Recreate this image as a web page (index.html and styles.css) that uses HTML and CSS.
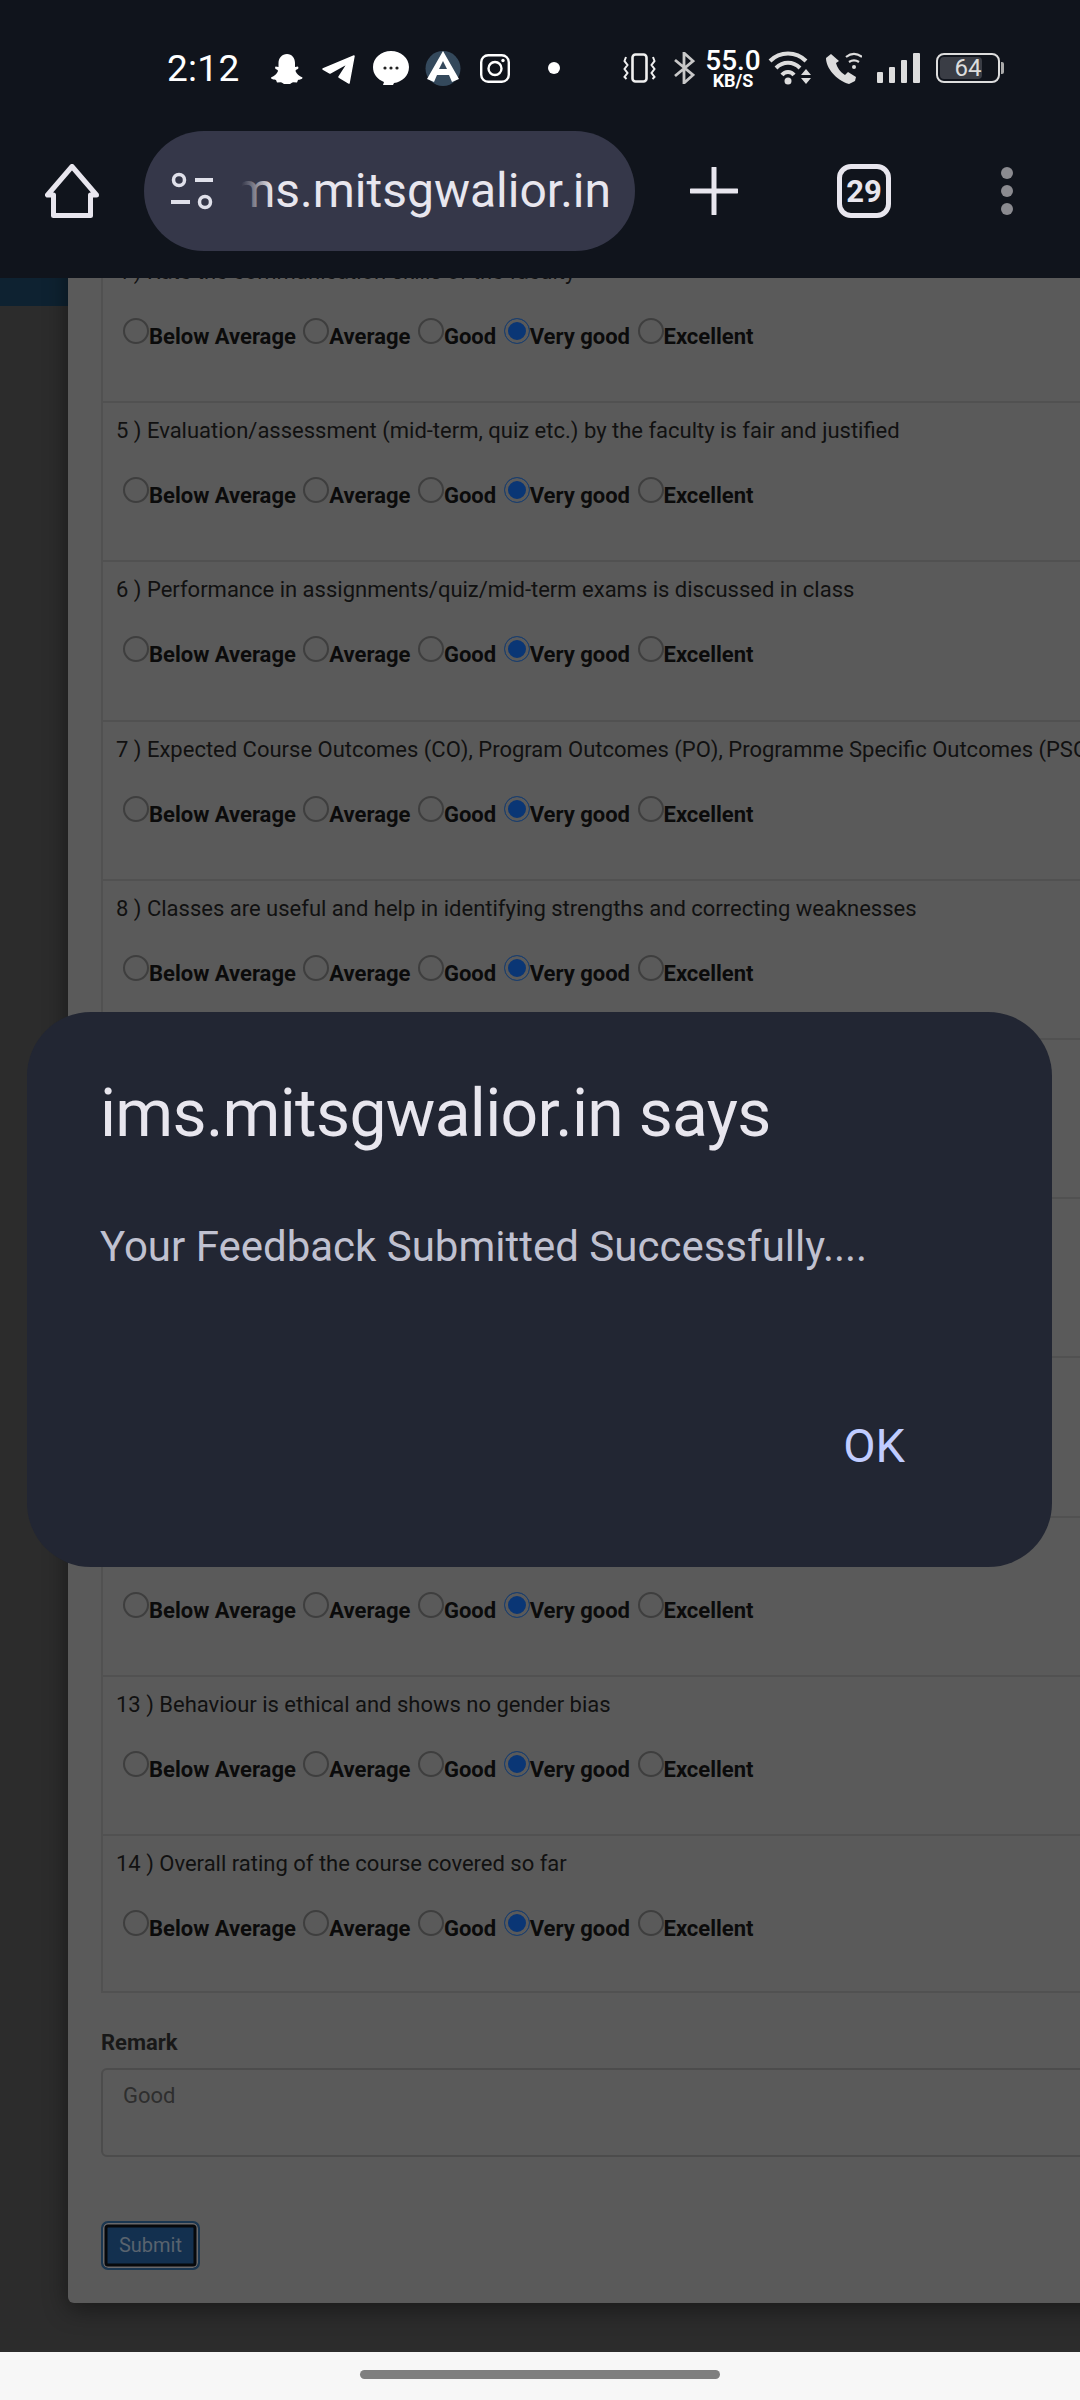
FILE: index.html
```html
<!DOCTYPE html>
<html lang="en">
<head>
<meta charset="utf-8">
<title>Feedback</title>
<link rel="stylesheet" href="styles.css">
</head>
<body>
<div class="screen">
  <header class="chrome">
    <div class="status">
      <span class="time">2:12</span>
      <svg class="si snap" viewBox="0 0 32 30"><path d="M16 0c5 0 8 4 8 9v4l3-.5.5 1.500c-.5 1.500-3 1.500-3 3 1 3 3.500 5 7 6.500 0 2-3 2-4.500 2.500l-1 2.500-4-.3c-2 .8-3.500 2.800-6 2.800s-4-2-6-2.800l-4 .3-1-2.500C3 25.500 0 25.500 0 23.500c3.500-1.500 6-3.500 7-6.500 0-1.500-2.500-1.500-3-3l.5-1.500 3 .5V9c0-5 3.500-9 8.500-9z" fill="#fff"/></svg>
      <svg class="si tele" viewBox="0 0 33 29"><path d="M1 14 32 1 27 28 17 22 26 8 8 18Z" fill="#fff" stroke="#fff" stroke-width="1.500" stroke-linejoin="round"/></svg>
      <svg class="si bubble" viewBox="0 0 36 34"><path d="M18 0c10 0 18 7 18 16 0 9-7 15-15 16l-1 2H10l1-3C4 28 0 23 0 16 0 7 8 0 18 0z" fill="#fff"/><circle cx="12" cy="17" r="1.600" fill="#222"/><circle cx="18" cy="17" r="1.600" fill="#222"/><circle cx="24" cy="17" r="1.600" fill="#222"/></svg>
      <svg class="si arc" viewBox="0 0 36 35"><circle cx="18" cy="17.500" r="17.500" fill="#34495c"/><path d="M18 0 34 28l-7 3-3-7H12l-3 7-7-3zM18 10l-4 8h8z" fill="#fff" fill-rule="evenodd"/></svg>
      <svg class="si insta" viewBox="0 0 30 29"><rect x="1.200" y="1.200" width="27.600" height="26.600" rx="7" fill="none" stroke="#fff" stroke-width="2.400"/><circle cx="15" cy="14.500" r="6.500" fill="none" stroke="#fff" stroke-width="2.400"/><circle cx="23" cy="6.500" r="1.700" fill="#fff"/></svg>
      <span class="dot"></span>
      <svg class="si vib" viewBox="0 0 33 30"><rect x="9.500" y="1.500" width="14" height="27" rx="3" fill="none" stroke="#f0f0f0" stroke-width="2.600"/><path d="M3 4 1.500 8l3 4-3 4 3 4-3 4 2 2M30 4l1.500 4-3 4 3 4-3 4 3 4-2 2" fill="none" stroke="#f0f0f0" stroke-width="2"/></svg>
      <svg class="si bt" viewBox="0 0 22 32"><path d="M2 8 20 23 11 31V1l9 8L2 24" fill="none" stroke="#c8c8c8" stroke-width="2.800"/></svg>
      <span class="speed"><span class="speed-n">55.0</span><span class="speed-u">KB/S</span></span>
      <svg class="si wifi" viewBox="0 0 44 35"><path d="M2 11C12 1 28 1 38 11M8 18C15 11 25 11 32 18M14 25c3-4 9-4 12 0" fill="none" stroke="#ddd" stroke-width="4"/><circle cx="20" cy="31" r="3.500" fill="#ddd"/><path d="M33 25h10l-5-6zM33 28h10l-5 6z" fill="#ddd"/></svg>
      <svg class="si call" viewBox="0 0 36 32"><path d="M5 2 0 6c0 10 10 22 23 26l6-3 1-4-8-5-3 3C14 20 11 15 10 11l3-2z" fill="#ddd"/><path d="M20 5c5-4 11-4 16 0M23 10c3-2 7-2 10 0" fill="none" stroke="#ddd" stroke-width="2.200"/><circle cx="28" cy="15" r="2" fill="#ddd"/></svg>
      <svg class="si sig" viewBox="0 0 43 30"><rect x="0" y="19" width="6" height="11" rx="1" fill="#ddd"/><rect x="12" y="14" width="6" height="16" rx="1" fill="#ddd"/><rect x="24" y="7" width="6" height="23" rx="1" fill="#ddd"/><rect x="36" y="0" width="7" height="30" rx="1" fill="#ddd"/></svg>
      <span class="batt"><span class="batt-fill"></span><span class="batt-n">64</span></span><span class="batt-nub"></span>
    </div>
    <div class="toolbar">
      <svg class="home" viewBox="0 0 54 54"><path d="M27 2.500 2.500 31H8.500V51.500H45.500V31H51.500Z" fill="none" stroke="#e8e6ee" stroke-width="5" stroke-linejoin="round"/></svg>
      <div class="pill">
        <svg class="tune" viewBox="0 0 46 38"><circle cx="9" cy="8" r="5.500" fill="none" stroke="#e0e0ea" stroke-width="3.500"/><path d="M25 8H43M1 30H20" stroke="#e0e0ea" stroke-width="4"/><circle cx="35" cy="30" r="5.500" fill="none" stroke="#e0e0ea" stroke-width="3.500"/></svg>
        <div class="url"><span class="url-text">ims.mitsgwalior.in</span><span class="url-fade"></span></div>
      </div>
      <svg class="plus" viewBox="0 0 48 48"><path d="M24 1V47M1 24H47" stroke="#e8e6ee" stroke-width="5" stroke-linecap="round"/></svg>
      <span class="tabs">29</span>
      <span class="menu"><i></i><i></i><i></i></span>
    </div>
  </header>

  <main class="page">
    <aside class="side"><div class="side-bar"></div></aside>
    <section class="panel">
      <div class="rows">
        <div class="row"><p class="q">4 ) Rate the communication skills of the faculty</p><div class="opts"><label class="opt"><input type="radio" name="q4" disabled><span>Below Average</span></label><label class="opt"><input type="radio" name="q4" disabled><span>Average</span></label><label class="opt"><input type="radio" name="q4" disabled><span>Good</span></label><label class="opt"><input type="radio" name="q4" checked disabled><span>Very good</span></label><label class="opt"><input type="radio" name="q4" disabled><span>Excellent</span></label></div></div>
        <div class="row"><p class="q">5 ) Evaluation/assessment (mid-term, quiz etc.) by the faculty is fair and justified</p><div class="opts"><label class="opt"><input type="radio" name="q5" disabled><span>Below Average</span></label><label class="opt"><input type="radio" name="q5" disabled><span>Average</span></label><label class="opt"><input type="radio" name="q5" disabled><span>Good</span></label><label class="opt"><input type="radio" name="q5" checked disabled><span>Very good</span></label><label class="opt"><input type="radio" name="q5" disabled><span>Excellent</span></label></div></div>
        <div class="row"><p class="q">6 ) Performance in assignments/quiz/mid-term exams is discussed in class</p><div class="opts"><label class="opt"><input type="radio" name="q6" disabled><span>Below Average</span></label><label class="opt"><input type="radio" name="q6" disabled><span>Average</span></label><label class="opt"><input type="radio" name="q6" disabled><span>Good</span></label><label class="opt"><input type="radio" name="q6" checked disabled><span>Very good</span></label><label class="opt"><input type="radio" name="q6" disabled><span>Excellent</span></label></div></div>
        <div class="row"><p class="q">7 ) Expected Course Outcomes (CO), Program Outcomes (PO), Programme Specific Outcomes (PSOs)</p><div class="opts"><label class="opt"><input type="radio" name="q7" disabled><span>Below Average</span></label><label class="opt"><input type="radio" name="q7" disabled><span>Average</span></label><label class="opt"><input type="radio" name="q7" disabled><span>Good</span></label><label class="opt"><input type="radio" name="q7" checked disabled><span>Very good</span></label><label class="opt"><input type="radio" name="q7" disabled><span>Excellent</span></label></div></div>
        <div class="row"><p class="q">8 ) Classes are useful and help in identifying strengths and correcting weaknesses</p><div class="opts"><label class="opt"><input type="radio" name="q8" disabled><span>Below Average</span></label><label class="opt"><input type="radio" name="q8" disabled><span>Average</span></label><label class="opt"><input type="radio" name="q8" disabled><span>Good</span></label><label class="opt"><input type="radio" name="q8" checked disabled><span>Very good</span></label><label class="opt"><input type="radio" name="q8" disabled><span>Excellent</span></label></div></div>
        <div class="row"></div>
        <div class="row"></div>
        <div class="row"></div>
        <div class="row"><p class="q">&nbsp;</p><div class="opts"><label class="opt"><input type="radio" name="q12" disabled><span>Below Average</span></label><label class="opt"><input type="radio" name="q12" disabled><span>Average</span></label><label class="opt"><input type="radio" name="q12" disabled><span>Good</span></label><label class="opt"><input type="radio" name="q12" checked disabled><span>Very good</span></label><label class="opt"><input type="radio" name="q12" disabled><span>Excellent</span></label></div></div>
        <div class="row"><p class="q">13 ) Behaviour is ethical and shows no gender bias</p><div class="opts"><label class="opt"><input type="radio" name="q13" disabled><span>Below Average</span></label><label class="opt"><input type="radio" name="q13" disabled><span>Average</span></label><label class="opt"><input type="radio" name="q13" disabled><span>Good</span></label><label class="opt"><input type="radio" name="q13" checked disabled><span>Very good</span></label><label class="opt"><input type="radio" name="q13" disabled><span>Excellent</span></label></div></div>
        <div class="row"><p class="q">14 ) Overall rating of the course covered so far</p><div class="opts"><label class="opt"><input type="radio" name="q14" disabled><span>Below Average</span></label><label class="opt"><input type="radio" name="q14" disabled><span>Average</span></label><label class="opt"><input type="radio" name="q14" disabled><span>Good</span></label><label class="opt"><input type="radio" name="q14" checked disabled><span>Very good</span></label><label class="opt"><input type="radio" name="q14" disabled><span>Excellent</span></label></div></div>
      </div>
      <div class="remark-label">Remark</div>
      <div class="remark">Good</div>
      <button class="submit" type="button">Submit</button>
    </section>
  </main>

  <footer class="navbar"><span class="handle"></span></footer>

  <div class="dialog">
    <h1 class="d-title">ims.mitsgwalior.in says</h1>
    <p class="d-body">Your Feedback Submitted Successfully....</p>
    <div class="d-actions"><span class="d-ok">OK</span></div>
  </div>
</div>
</body>
</html>
```

FILE: styles.css
```css
* { box-sizing: border-box; }
html, body { margin: 0; padding: 0; }
body { width: 1080px; height: 2400px; overflow: hidden; font-family: Roboto, "Liberation Sans", sans-serif; background: #2c2c2c; }
.screen { position: relative; width: 1080px; height: 2400px; display: flex; flex-direction: column; overflow: hidden; }

.chrome { height: 278px; flex: none; background: #10141c; position: relative; z-index: 2; display: flex; flex-direction: column; }
.status { height: 131px; display: flex; align-items: flex-start; padding: 50px 0 0 167px; }
.si { display: block; flex: none; }
.time { width: 72px; height: 37px; font-size: 37px; line-height: 37px; color: #fff; letter-spacing: .3px; }
.snap { width: 32px; height: 30px; margin: 4px 0 0 32px; }
.tele { width: 33px; height: 29px; margin: 5px 0 0 19px; }
.bubble { width: 36px; height: 34px; margin: 1px 0 0 18px; }
.arc { width: 36px; height: 35px; margin: 1px 0 0 16px; }
.insta { width: 30px; height: 29px; margin: 4px 0 0 19px; }
.dot { width: 12px; height: 12px; margin: 12px 0 0 38px; border-radius: 50%; background: #fff; flex: none; }
.vib { width: 33px; height: 30px; margin: 3px 0 0 63px; }
.bt { width: 22px; height: 32px; margin: 2px 0 0 17px; }
.speed { width: 50px; margin: -2px 0 0 13px; color: #fff; display: flex; flex-direction: column; align-items: center; flex: none; }
.speed-n { font-size: 28px; line-height: 25px; font-weight: 500; height: 25px; }
.speed-u { font-size: 18px; line-height: 15px; font-weight: 700; height: 15px; }
.wifi { width: 44px; height: 35px; margin: 0 0 0 10px; }
.call { width: 36px; height: 32px; margin: 2px 0 0 14px; }
.sig { width: 43px; height: 30px; margin: 3px 0 0 15px; }
.batt { position: relative; width: 64px; height: 30px; margin: 3px 0 0 16px; border: 2px solid #ddd; border-radius: 8px; flex: none; display: flex; align-items: center; justify-content: center; }
.batt-fill { position: absolute; left: 2px; top: 2px; bottom: 2px; width: 42px; background: #3a3d45; border-radius: 4px; }
.batt-n { position: relative; color: #ddd; font-size: 24px; line-height: 26px; }
.batt-nub { width: 3px; height: 12px; margin: 12px 0 0 1px; background: #aaa; border-radius: 0 2px 2px 0; flex: none; }

.toolbar { height: 120px; display: flex; align-items: center; position: relative; }
.home { width: 54px; height: 54px; margin-left: 45px; flex: none; }
.pill { width: 491px; height: 120px; margin-left: 45px; border-radius: 60px; background: #353749; display: flex; align-items: center; flex: none; padding-left: 26px; }
.tune { width: 46px; height: 38px; flex: none; }
.url { position: relative; width: 373px; margin-left: 22px; height: 60px; overflow: hidden; display: flex; justify-content: flex-end; flex: none; }
.url-text { font-size: 48px; line-height: 60px; color: #e8e6ee; white-space: nowrap; flex: none; }
.url-fade { position: absolute; left: 0; top: 0; bottom: 0; width: 34px; background: linear-gradient(to right, #353749 10%, rgba(53,55,73,0)); }
.plus { width: 48px; height: 48px; margin-left: 55px; flex: none; }
.tabs { width: 54px; height: 54px; margin-left: 99px; border: 5px solid #e8e6ee; border-radius: 14px; color: #e8e6ee; font-size: 31px; font-weight: 700; display: flex; align-items: center; justify-content: center; flex: none; }
.menu { margin-left: 110px; display: flex; flex-direction: column; gap: 6px; flex: none; }
.menu i { display: block; width: 12px; height: 12px; border-radius: 50%; background: #8b8b90; }

.page { flex: 1; display: flex; min-height: 0; overflow: hidden; background: #2c2c2c; }
.side { width: 68px; flex: none; }
.side-bar { height: 28px; background: #0e2231; }
.panel { width: 1500px; height: 2061px; flex: none; margin-top: -36px; padding-left: 33px; background: #5a5a5a; border-radius: 6px; box-shadow: 0 6px 24px rgba(0,0,0,.45); }
.rows { width: 1400px; }
.row { height: 159.2px; border: 2px solid #515151; border-width: 2px 0 0 2px; padding: 13px 0 0 13px; }
.row:last-child { border-bottom-width: 2px; }
.q { margin: 0; font-size: 22px; line-height: 30px; color: #111; white-space: nowrap; }
.opts { display: flex; gap: 7.5px; margin: 31px 0 0 7px; }
.opt { display: flex; align-items: flex-start; }
.opt input { appearance: none; -webkit-appearance: none; width: 26px; height: 26px; margin: 0; border: 2px solid #3e3e3e; border-radius: 50%; background: transparent; flex: none; }
.opt input:checked { border: 1.5px solid #1c3f6c; background: #0a3675; box-shadow: inset 0 0 0 3px #5a5a5a; }
.opt span { font-size: 22px; line-height: 30px; font-weight: 700; color: #0b0b0b; margin-top: 4px; white-space: nowrap; }

.remark-label { margin-top: 36px; font-size: 22px; line-height: 28px; font-weight: 700; color: #181818; }
.remark { width: 1400px; height: 89px; margin-top: 11px; border: 2px solid #4c4c4c; border-radius: 6px; padding: 11px 0 0 20px; font-size: 22px; line-height: 30px; color: #2e2e2e; }
.submit { display: block; width: 99px; height: 49px; margin-top: 64px; padding: 0 0 2px; font-family: Roboto, "Liberation Sans", sans-serif; font-size: 20px; color: #59636e; background: #13304f; border: 2px solid #1a3650; border-radius: 7px; box-shadow: inset 0 0 0 1.5px #68686b, inset 0 0 0 4.5px #07090c; }

.navbar { height: 48px; flex: none; background: #f7f7f7; display: flex; justify-content: center; padding-top: 18px; position: relative; z-index: 2; }
.handle { width: 360px; height: 9px; border-radius: 5px; background: #7f7f7f; }

.dialog { position: absolute; z-index: 3; left: 27px; top: 1012px; width: 1025px; height: 555px; border-radius: 64px; background: #222633; padding: 0 73px; }
.d-title { margin: 64px 0 0; font-size: 66px; line-height: 76px; font-weight: 400; letter-spacing: -.7px; color: #e8e6ee; white-space: nowrap; }
.d-body { margin: 67px 0 0; font-size: 42px; line-height: 56px; color: #c0c1d0; white-space: nowrap; }
.d-actions { margin-top: 146px; display: flex; justify-content: flex-end; padding-right: 74px; }
.d-ok { font-size: 47px; line-height: 50px; font-weight: 400; color: #c0ccff; }
```
